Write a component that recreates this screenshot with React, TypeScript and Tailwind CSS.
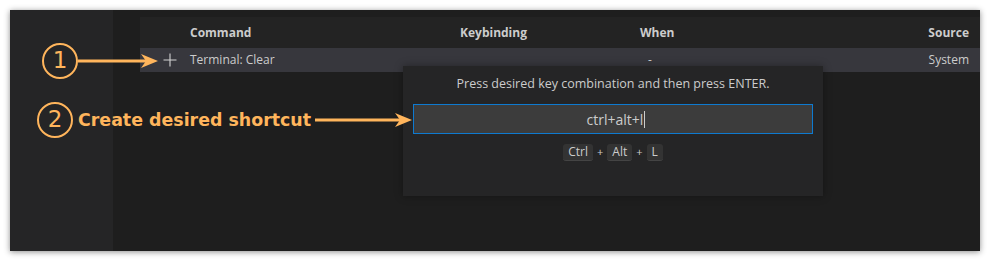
import React from "react";

// Keyboard shortcuts editor with the "press desired key combination" dialog
// and two orange callouts drawn over it.

const ORANGE = "#ffb55c";

function Callout({ n }: { n: string }) {
  return (
    <div className="w-[36px] h-[36px] rounded-full border-[2.5px] border-[#ffb55c] flex items-center justify-center text-[#ffb55c] text-[23px] leading-none font-['DejaVu_Sans',sans-serif] pb-[1px]">
      {n}
    </div>
  );
}

function Arrow({ width }: { width: number }) {
  return (
    <svg width={width} height={16} viewBox={`0 0 ${width} 16`} className="block">
      <line x1={0} y1={8} x2={width - 10} y2={8} stroke={ORANGE} strokeWidth={3} />
      <path d={`M${width} 8 L${width - 17} 1 L${width - 12} 8 L${width - 17} 15 Z`} fill={ORANGE} />
    </svg>
  );
}

function Key({ label }: { label: string }) {
  return (
    <span className="h-[17px] px-[5px] rounded-[3px] bg-[#333333] border-b border-[#444] text-[12px] leading-[16px] text-[#cccccc]">
      {label}
    </span>
  );
}

export default function App() {
  return (
    <div className="w-[992px] h-[263px] bg-white p-[10px] font-['Open_Sans',sans-serif]">
      <div className="relative w-[970px] h-[241px] flex shadow-[0_1px_6px_rgba(0,0,0,0.45)]">
        {/* activity / side area */}
        <div className="w-[103px] bg-[#252526]" />

        {/* editor area with table */}
        <div className="flex-1 bg-[#1e1e1e] pt-[7px] pl-[27px]">
          <div className="h-[31px] bg-[#232323] flex items-center text-[12px] font-bold text-[#cccccc]">
            <div className="w-[50px]" />
            <div className="w-[270px]">Command</div>
            <div className="w-[180px]">Keybinding</div>
            <div className="flex-1">When</div>
            <div className="pr-[11px]">Source</div>
          </div>
          <div className="h-[24px] bg-[#37373d] flex items-center text-[12px] text-[#cccccc]">
            <div className="w-[50px] flex justify-center pl-[9px]">
              <svg width="14" height="14" viewBox="0 0 14 14">
                <path d="M7 0.5V13.5M0.5 7H13.5" stroke="#d4d4d4" strokeWidth="1.1" />
              </svg>
            </div>
            <div className="w-[270px]">Terminal: Clear</div>
            <div className="w-[180px]" />
            <div className="flex-1 pl-[8px]">-</div>
            <div className="pr-[11px]">System</div>
          </div>
        </div>

        {/* key capture dialog */}
        <div className="absolute left-[393px] top-[56px] w-[420px] h-[130px] bg-[#252526] shadow-[0_0_8px_rgba(0,0,0,0.35)] flex flex-col items-center px-[10px]">
          <div className="h-[38px] pt-[9px] text-[12.5px] text-[#cccccc]">
            Press desired key combination and then press ENTER.
          </div>
          <div className="w-[400px] h-[30px] bg-[#3c3c3c] border border-[#0e7ad0] flex items-center justify-center text-[14px] text-[#cccccc] pl-[6px]">
            ctrl+alt+l<span className="w-px h-[17px] bg-[#cccccc] ml-[1px]" />
          </div>
          <div className="mt-[10px] flex items-center gap-[4px] text-[11px] text-[#cccccc]">
            <Key label="Ctrl" />
            <span>+</span>
            <Key label="Alt" />
            <span>+</span>
            <Key label="L" />
          </div>
        </div>

        {/* callout 1 */}
        <div className="absolute left-[32px] top-[33px] flex items-center">
          <Callout n="1" />
          <Arrow width={80} />
        </div>

        {/* callout 2 */}
        <div className="absolute left-[27px] top-[92px] flex items-center">
          <Callout n="2" />
          <span className="ml-[5px] text-[17.4px] font-bold text-[#ffb55c] font-['DejaVu_Sans',sans-serif]">
            Create desired shortcut
          </span>
          <div className="ml-[4px]">
            <Arrow width={97} />
          </div>
        </div>
      </div>
    </div>
  );
}
